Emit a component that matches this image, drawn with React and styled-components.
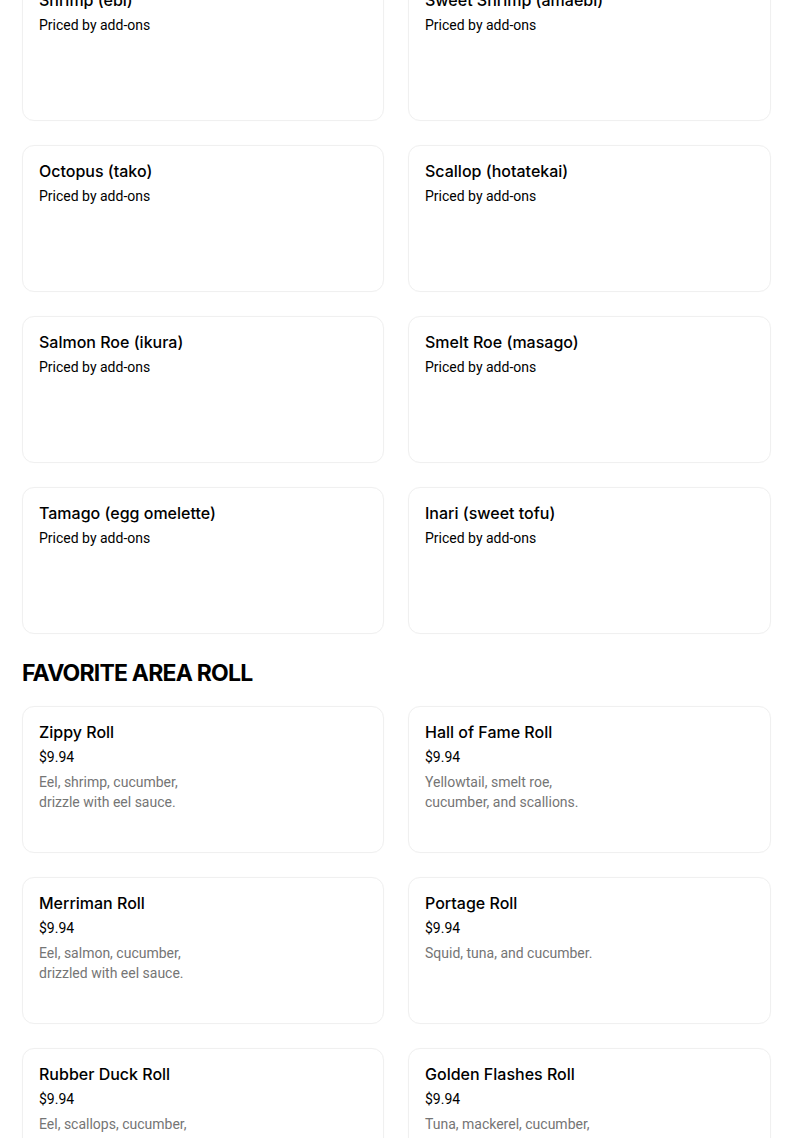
import styled, { createGlobalStyle } from "styled-components";

const GlobalStyle = createGlobalStyle`
  * { box-sizing: border-box; }
  body {
    margin: 0;
    background: #ffffff;
    font-family: Inter, "Noto Sans", sans-serif;
    color: #000000;
    overflow: hidden;
  }
`;

const nigiri = [
  { name: "Shrimp (ebi)" },
  { name: "Sweet Shrimp (amaebi)" },
  { name: "Octopus (tako)" },
  { name: "Scallop (hotatekai)" },
  { name: "Salmon Roe (ikura)" },
  { name: "Smelt Roe (masago)" },
  { name: "Tamago (egg omelette)" },
  { name: "Inari (sweet tofu)" },
];

const rolls = [
  { name: "Zippy Roll", price: "$9.94", desc: "Eel, shrimp, cucumber, drizzle with eel sauce." },
  { name: "Hall of Fame Roll", price: "$9.94", desc: "Yellowtail, smelt roe, cucumber, and scallions." },
  { name: "Merriman Roll", price: "$9.94", desc: "Eel, salmon, cucumber, drizzled with eel sauce." },
  { name: "Portage Roll", price: "$9.94", desc: "Squid, tuna, and cucumber." },
  { name: "Rubber Duck Roll", price: "$9.94", desc: "Eel, scallops, cucumber, scallions with duck sauce." },
  { name: "Golden Flashes Roll", price: "$9.94", desc: "Tuna, mackerel, cucumber, scallions, masago and eel sauce." },
];

const ItemCard = ({ item }) => (
  <Card>
    <Title>{item.name}</Title>
    <Price>{item.price || "Priced by add-ons"}</Price>
    {item.desc && <Desc>{item.desc}</Desc>}
  </Card>
);

const App = () => {
  return (
    <Page>
      <GlobalStyle />
      <Grid>
        {nigiri.map((item) => (
          <ItemCard key={item.name} item={item} />
        ))}
      </Grid>
      <SectionTitle>FAVORITE AREA ROLL</SectionTitle>
      <Grid>
        {rolls.map((item) => (
          <ItemCard key={item.name} item={item} />
        ))}
      </Grid>
    </Page>
  );
};

const Page = styled.div`
  width: 804px;
  padding: 0 33px 0 22px;
  margin-top: -26px;
`;

const Grid = styled.div`
  display: grid;
  grid-template-columns: 362px 363px;
  column-gap: 24px;
  row-gap: 24px;
`;

const Card = styled.div`
  height: 147px;
  border: 1px solid #f0f0f0;
  border-radius: 12px;
  padding: 15px 16px;
  display: flex;
  flex-direction: column;
  box-shadow: 0 0 1px rgba(0, 0, 0, 0.04);
`;

const Title = styled.div`
  font-size: 16px;
  font-weight: 500;
  line-height: 20px;
  color: #000000;
`;

const Price = styled.div`
  margin-top: 5px;
  font-family: Roboto, "Liberation Sans", sans-serif;
  font-size: 14px;
  line-height: 20px;
  color: #000000;
`;

const Desc = styled.div`
  margin-top: 5px;
  max-width: 180px;
  font-family: Roboto, "Liberation Sans", sans-serif;
  font-size: 14px;
  line-height: 20px;
  color: #757575;
`;

const SectionTitle = styled.h2`
  margin: 23px 0 17px;
  font-size: 23px;
  font-weight: 700;
  line-height: 32px;
  letter-spacing: -0.8px;
  color: #000000;
`;

export default App;
